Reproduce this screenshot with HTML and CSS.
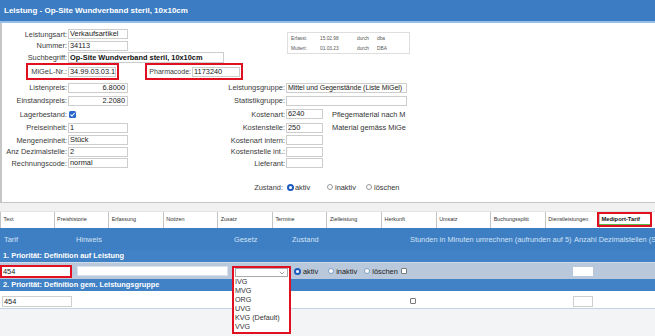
FILE: index.html
```html
<!DOCTYPE html>
<html lang="de">
<head>
<meta charset="utf-8">
<title>Leistung - Op-Site Wundverband steril, 10x10cm</title>
<link rel="stylesheet" href="styles.css">
</head>
<body>
<header class="titlebar">Leistung - Op-Site Wundverband steril, 10x10cm</header>

<section class="form">
  <div class="top">
    <div class="top-left">
      <div class="frow h12"><span class="lbl">Leistungsart:</span><span class="inp w60">Verkaufsartikel</span></div>
      <div class="frow h11"><span class="lbl">Nummer:</span><span class="inp w60">34113</span></div>
      <div class="frow h12"><span class="lbl">Suchbegriff:</span><span class="inp w156 bold">Op-Site Wundverband steril, 10x10cm</span></div>
      <div class="frow h17">
        <div class="redbox mig"><span class="lbl-mig">MiGeL-Nr.:</span><span class="inp w48">34.99.03.03.1</span></div>
        <div class="redbox pharma"><span class="lbl-ph">Pharmacode:</span><span class="inp w48">1173240</span></div>
      </div>
    </div>
    <div class="info">
      <span>Erfasst:</span><span>15.02.98</span><span>durch</span><span>dba</span>
      <span>Mutiert:</span><span>01.03.23</span><span>durch</span><span>DBA</span>
    </div>
  </div>

  <div class="mid">
    <span class="lbl">Listenpreis:</span><span class="inp w60 num">6.8000</span>
    <span class="lbl2">Leistungsgruppe:</span><span class="inp w121 tight">Mittel und Gegenstände (Liste MiGel)</span>

    <span class="lbl">Einstandspreis:</span><span class="inp w60 num">2.2080</span>
    <span class="lbl2">Statistikgruppe:</span><span class="inp w121"></span>

    <span class="lbl">Lagerbestand:</span><span class="cell"><span class="chk-on"><svg viewBox="0 0 7 7" width="7" height="7"><path d="M1.5 3.6 L3 5 L5.6 2" fill="none" stroke="#fff" stroke-width="1.1"/></svg></span></span>
    <span class="lbl2">Kostenart:</span><span class="cell"><span class="inp w37">6240</span><span class="note">Pflegematerial nach M</span></span>

    <span class="lbl">Preiseinheit:</span><span class="inp w60">1</span>
    <span class="lbl2">Kostenstelle:</span><span class="cell"><span class="inp w37">250</span><span class="note">Material gemäss MiGe</span></span>

    <span class="lbl">Mengeneinheit:</span><span class="inp w60">Stück</span>
    <span class="lbl2">Kostenart intern:</span><span class="cell"><span class="inp w37"></span></span>

    <span class="lbl">Anz Dezimalstelle:</span><span class="inp w60">2</span>
    <span class="lbl2">Kostenstelle int.:</span><span class="cell"><span class="inp w37"></span></span>

    <span class="lbl">Rechnungscode:</span><span class="inp w60">normal</span>
    <span class="lbl2">Lieferant:</span><span class="cell"><span class="inp w37"></span></span>
  </div>

  <div class="zustand">
    <span class="lbl-z">Zustand:</span>
    <span class="opt o1"><span class="radio-on"></span>aktiv</span>
    <span class="opt o2"><span class="radio"></span>inaktiv</span>
    <span class="opt o3"><span class="radio"></span>löschen</span>
  </div>
</section>

<div class="band-gap"></div>

<nav class="tabs">
  <span class="tab">Text</span>
  <span class="tab">Preishistorie</span>
  <span class="tab">Erfassung</span>
  <span class="tab">Notizen</span>
  <span class="tab">Zusatz</span>
  <span class="tab">Termine</span>
  <span class="tab">Zielleistung</span>
  <span class="tab">Herkunft</span>
  <span class="tab">Umsatz</span>
  <span class="tab">Buchungssplitt</span>
  <span class="tab">Dienstleistungen</span>
  <span class="tab active">Mediport-Tarif</span>
</nav>

<section class="tarif">
  <div class="thead grid">
    <span class="c1">Tarif</span>
    <span class="c">Hinweis</span>
    <span class="c">Gesetz</span>
    <span class="c">Zustand</span>
    <span class="c">Stunden in Minuten umrechnen (aufrunden auf 5)</span>
    <span class="c">Anzahl Dezimalstellen (S</span>
  </div>
  <div class="prio">1. Priorität: Definition auf Leistung</div>
  <div class="trow row1 grid">
    <span class="cell"><span class="redbox tarif-box">454</span></span>
    <span class="cell"><span class="tinp hinweis"></span></span>
    <span class="cell gesetz">
      <span class="redbox dropdown">
        <span class="select"><svg class="arrow" viewBox="0 0 6 4" width="6" height="4"><path d="M0.8 0.8 L3 3 L5.2 0.8" fill="none" stroke="#9a9a9a" stroke-width="0.9"/></svg></span>
        <span class="opts">
          <span>IVG</span>
          <span>MVG</span>
          <span>ORG</span>
          <span>UVG</span>
          <span>KVG (Default)</span>
          <span>VVG</span>
        </span>
      </span>
    </span>
    <span class="cell radios">
      <span class="ropt r1"><span class="radio-on"></span>aktiv</span>
      <span class="ropt r2"><span class="radio light"></span>inaktiv</span>
      <span class="ropt r3"><span class="radio light"></span>löschen</span>
      <span class="box-chk"></span>
    </span>
    <span class="cell"></span>
    <span class="cell"><span class="tinp small"></span></span>
  </div>
  <div class="prio">2. Priorität: Definition gem. Leistungsgruppe</div>
  <div class="trow row2 grid">
    <span class="cell"><span class="tinp tarif2">454</span></span>
    <span class="cell"></span>
    <span class="cell"></span>
    <span class="cell"></span>
    <span class="cell"><span class="box-chk c5"></span></span>
    <span class="cell"><span class="tinp small bordered"></span></span>
  </div>
</section>
</body>
</html>
```

FILE: styles.css
```css
* { box-sizing: border-box; margin: 0; padding: 0; }

html, body { width: 655px; height: 336px; overflow: hidden; }

body {
  font-family: "Liberation Sans", Arial, sans-serif;
  font-size: 7.4px;
  color: #333;
  background: #f3f4f6;
}

.titlebar {
  height: 23px;
  background: #3b7cc2;
  border-bottom: 2px solid #95bfe9;
  color: #fff;
  font-weight: bold;
  font-size: 8px;
  line-height: 21px;
  padding-left: 4px;
  white-space: nowrap;
}

/* ---------- form ---------- */
.form {
  height: 180px;
  background: #fff;
  border-left: 2px solid #c6c6c6;
  border-bottom: 1px solid #c6c6c6;
  padding-top: 5px;
}

.top { display: flex; }
.top-left { width: 285px; }

.frow { display: flex; align-items: center; }
.h11 { height: 11px; }
.h12 { height: 12px; }
.h17 { height: 17px; }

.lbl {
  width: 66px;
  padding-right: 1px;
  text-align: right;
  white-space: nowrap;
  color: #3a3a3a;
}

.inp {
  display: block;
  height: 10px;
  border: 1px solid #cdcdcd;
  background: #fff;
  line-height: 8px;
  padding-left: 1px;
  white-space: nowrap;
  overflow: hidden;
  color: #222;
}
.w37 { width: 37px; }
.w48 { width: 48px; }
.w60 { width: 60px; }
.w121 { width: 121px; }
.w156 { width: 156px; }
.bold { font-weight: bold; color: #111; height: 11px; line-height: 9px; }
.num { text-align: right; padding-right: 2px; }
.tight { font-size: 7px; letter-spacing: -0.05px; }

.redbox { border: 2px solid #e01020; }

.mig {
  display: flex;
  align-items: center;
  height: 17px;
  margin-left: 24px;
  padding-right: 1px;
}
.lbl-mig { width: 40px; padding-right: 1px; text-align: right; white-space: nowrap; color: #3a3a3a; }

.pharma {
  display: flex;
  align-items: center;
  height: 17px;
  margin-left: 26px;
  padding-left: 2px;
  padding-right: 1px;
}
.lbl-ph { width: 43px; padding-right: 1px; text-align: right; white-space: nowrap; color: #3a3a3a; font-size: 7px; }

.info {
  margin-top: 4px;
  width: 123px;
  height: 22px;
  border: 1px solid #dedede;
  padding-left: 3px;
  display: grid;
  grid-template-columns: 29px 37px 20px 1fr;
  grid-template-rows: 10px 10px;
  align-items: center;
  font-size: 4.8px;
  color: #555;
}

.mid {
  margin-top: 1px;
  display: grid;
  grid-template-columns: 66px 61px 157px 1fr;
  grid-template-rows: 13px 13px 14px 13px 12px 11px 12px;
  align-items: center;
}
.mid .lbl { width: auto; }
.lbl2 {
  padding-right: 1px;
  text-align: right;
  white-space: nowrap;
  color: #3a3a3a;
}
.cell { display: flex; align-items: center; }

.note {
  margin-left: 9px;
  white-space: nowrap;
  color: #333;
}

.chk-on {
  display: block;
  width: 7px;
  height: 7px;
  margin-left: 1px;
  background: #2766cc;
  border-radius: 1.5px;
}
.chk-on svg { display: block; }

.zustand {
  margin-top: 12px;
  height: 12px;
  display: flex;
  align-items: center;
}
.lbl-z { width: 282px; padding-right: 1px; text-align: right; color: #3a3a3a; }
.opt { display: flex; align-items: center; gap: 1px; }
.o1 { margin-left: 3px; width: 40px; }
.o2 { width: 39px; }

.radio-on {
  display: block;
  width: 7px;
  height: 7px;
  border-radius: 50%;
  border: 2px solid #1d5cbf;
  background: #fff;
}
.radio {
  display: block;
  width: 6px;
  height: 6px;
  border-radius: 50%;
  border: 1px solid #9a9a9a;
  background: #fff;
  margin-right: 1px;
}
.radio.light { border-color: #7f9fc6; }

/* ---------- tabs ---------- */
.band-gap { height: 8px; background: #f1f1f1; }

.tabs {
  height: 17px;
  display: grid;
  grid-template-columns: repeat(12, 1fr);
  background: #fff;
  border-top: 1px solid #e2e2e2;
}
.tab {
  border-right: 1px solid #c4c4c4;
  font-size: 5.4px;
  line-height: 15px;
  padding-left: 2.5px;
  white-space: nowrap;
  overflow: hidden;
  color: #333;
}
.tab:first-child { border-left: 1px solid #c4c4c4; }
.tab.active {
  margin-left: -3px;
  margin-right: 3px;
  margin-bottom: 1px;
  border: 2px solid #e01020;
  box-shadow: inset 0 -1px 0 #5cba4a;
  font-weight: bold;
  font-size: 5.8px;
  line-height: 11px;
  padding-left: 2px;
  color: #111;
}

/* ---------- tarif table ---------- */
.grid {
  display: grid;
  grid-template-columns: 73px 158px 58px 118px 164px 1fr;
}

.thead {
  height: 22px;
  background: #3e7fc4;
  color: #d3e2f4;
  align-items: center;
  white-space: nowrap;
}
.thead .c1 { padding-left: 4px; }
.thead .c { padding-left: 3px; }

.prio {
  height: 12px;
  line-height: 12px;
  background: #4181c5;
  color: #fff;
  font-weight: bold;
  padding-left: 3px;
  white-space: nowrap;
}

.trow { height: 17px; align-items: center; }
.row1 { background: #b9c9db; border-top: 1px solid #cfdbe8; }
.row2 { background: #fff; border-bottom: 1px solid #c2d3e5; height: 18px; padding-top: 3px; }

.tarif-box {
  display: block;
  width: 72px;
  height: 13px;
  background: #fff;
  line-height: 9px;
  padding-left: 1px;
  color: #222;
  margin-top: 1px;
}

.tinp {
  display: block;
  height: 10px;
  background: #fff;
  line-height: 8px;
  padding-left: 1px;
  color: #222;
}
.hinweis { margin-left: 4px; width: 151px; border: 1px solid #d9e2ec; }
.small { margin-left: 2px; width: 20px; height: 9px; }
.bordered { border: 1px solid #cfcfcf; height: 11px; }
.tarif2 { margin-left: 2px; width: 70px; height: 11px; border: 1px solid #cfcfcf; line-height: 9px; }

.gesetz { position: relative; height: 100%; }
.dropdown {
  position: absolute;
  left: 1px;
  top: 3px;
  width: 59px;
  height: 68px;
  background: #fff;
  display: flex;
  flex-direction: column;
  z-index: 2;
}
.select {
  display: block;
  margin-left: 1px;
  width: 53px;
  height: 9px;
  border: 1px solid #a8a8a8;
  position: relative;
  flex: none;
}
.arrow { position: absolute; right: 2px; top: 2px; }
.opts { display: flex; flex-direction: column; padding-left: 1px; }
.opts span { height: 9px; line-height: 9px; font-size: 7.2px; color: #333; white-space: nowrap; }

.radios { padding-left: 5px; }
.ropt { display: flex; align-items: center; gap: 1px; color: #222; }
.r1 { width: 37px; }
.r1 .radio-on { margin-right: 1px; }
.r2 { width: 39px; }
.r3 { width: 40px; }

.box-chk {
  display: block;
  width: 6px;
  height: 6px;
  border: 1px solid #7a7a7a;
  border-radius: 1px;
  background: #fff;
}
.c5 { margin-left: 3px; }
```
